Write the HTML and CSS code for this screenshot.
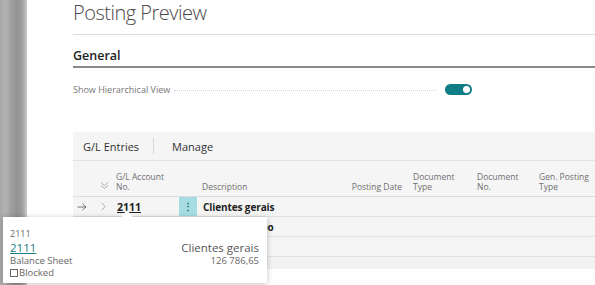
FILE: index.html
```html
<!DOCTYPE html>
<html lang="en">
<head>
    <meta charset="UTF-8">
    <title>Posting Preview</title>
    <link rel="stylesheet" href="styles.css">
</head>
<body>
    <div class="shell">
        <div class="strip"></div>
        <div class="page">
            <h1 class="title">Posting Preview</h1>
            <div class="group">
                <h2 class="group-title">General</h2>
                <div class="field">
                    <span class="field-label">Show Hierarchical View</span>
                    <span class="leader"></span>
                    <span class="toggle"><span class="knob"></span></span>
                </div>
            </div>

            <div class="part">
                <div class="part-bar">
                    <span class="part-name">G/L Entries</span>
                    <span class="part-sep"></span>
                    <span class="part-action">Manage</span>
                </div>
                <div class="grid head">
                    <span></span>
                    <span class="expand">
                        <svg width="9" height="9" viewBox="0 0 9 9"><path d="M1 1.5 L4.5 4.5 L8 1.5 M1 4.5 L4.5 7.5 L8 4.5" fill="none" stroke="#9a9a9a" stroke-width="0.8"/></svg>
                    </span>
                    <span>G/L Account<br>No.</span>
                    <span></span>
                    <span>Description</span>
                    <span class="right">Posting Date</span>
                    <span>Document<br>Type</span>
                    <span>Document<br>No.</span>
                    <span>Gen. Posting<br>Type</span>
                </div>
                <div class="grid row">
                    <span class="cursor">
                        <svg width="10" height="8" viewBox="0 0 10 8"><path d="M0.5 4 H9 M5.5 0.8 L9 4 L5.5 7.2" fill="none" stroke="#6a6a6a" stroke-width="0.9"/></svg>
                    </span>
                    <span class="chev">
                        <svg width="5" height="9" viewBox="0 0 5 9"><path d="M0.8 0.8 L4.2 4.5 L0.8 8.2" fill="none" stroke="#a6a6a6" stroke-width="0.9"/></svg>
                    </span>
                    <span class="acct">2111</span>
                    <span class="dots">&#8942;</span>
                    <span class="desc">Clientes gerais</span>
                    <span></span><span></span><span></span><span></span>
                </div>
                <div class="grid row">
                    <span></span><span></span><span></span><span></span>
                    <span class="desc">Clientes grupo</span>
                    <span></span><span></span><span></span><span></span>
                </div>
                <div class="grid row">
                    <span></span><span></span><span></span><span></span>
                    <span></span><span></span><span></span><span></span><span></span>
                </div>
                <div class="grid tail"></div>
            </div>
        </div>
    </div>

    <div class="card">
        <div class="card-key">2111</div>
        <div class="card-line">
            <span class="card-link">2111</span>
            <span class="card-name">Clientes gerais</span>
        </div>
        <div class="card-line small">
            <span>Balance Sheet</span>
            <span>126 786,65</span>
        </div>
        <div class="card-check"><span class="box"></span>Blocked</div>
    </div>
</body>
</html>
```

FILE: styles.css
```css
body {
    margin: 0;
    width: 595px;
    height: 285px;
    overflow: hidden;
    font-family: "Open Sans", "Noto Sans", sans-serif;
    color: #333;
    background: #fff;
    position: relative;
}
.shell {
    display: flex;
    height: 285px;
}
.strip {
    width: 27px;
    flex: none;
    background: linear-gradient(90deg, #a9a9a9 0, #b3b3b3 6px, #a2a2a2 10px, #939393 17px, #9d9d9d 22px, #c9c9c9 27px);
}
.page {
    flex: 1;
    padding-left: 46px;
    overflow: hidden;
}
.title {
    margin: 0;
    font-weight: 300;
    font-size: 20px;
    line-height: 26px;
    color: #4a4a4a;
    padding-bottom: 8px;
    border-bottom: 1px solid #dcdcdc;
    letter-spacing: -0.5px;
}
.group-title {
    margin: 12px 0 0;
    font-size: 12.5px;
    font-weight: 600;
    line-height: 18px;
    color: #222;
    padding-bottom: 1px;
    border-bottom: 2px solid #8a8a8a;
}
.field {
    display: flex;
    align-items: center;
    margin-top: 14px;
    height: 14px;
}
.field-label {
    font-size: 9px;
    color: #777;
}
.leader {
    width: 262px;
    margin: 2px 9px 0 4px;
    border-bottom: 1px dotted #d4d4d4;
}
.toggle {
    width: 27px;
    height: 11px;
    border-radius: 6px;
    background: #0f7d86;
    display: flex;
    justify-content: flex-end;
    align-items: center;
    padding-right: 2px;
    box-sizing: border-box;
}
.knob {
    width: 7px;
    height: 7px;
    border-radius: 50%;
    background: #fff;
}
.part {
    margin-top: 36px;
    background: #f5f5f5;
}
.part-bar {
    display: flex;
    align-items: center;
    height: 28px;
    padding-left: 10px;
    border-bottom: 1px solid #e2e2e2;
    font-size: 11px;
    color: #333;
}
.part-sep {
    width: 1px;
    height: 16px;
    background: #d6d6d6;
    margin: 0 18px 0 14px;
}
.grid {
    display: grid;
    grid-template-columns: 22px 18px 66px 18px 148px 63px 64px 62px 62px;
}
.head {
    height: 36px;
    align-items: end;
    font-size: 8.5px;
    line-height: 10px;
    color: #6f6f6f;
    border-bottom: 1px solid #dedede;
    padding-bottom: 4px;
    box-sizing: border-box;
}
.head span:nth-child(3) {
    padding-left: 3px;
}
.head .right {
    text-align: right;
    padding-right: 6px;
    white-space: nowrap;
}
.head span:nth-child(n+5) {
    padding-left: 5px;
}
.expand {
    padding-left: 5px;
}
.row {
    height: 19px;
    align-items: center;
    border-bottom: 1px solid #e1e1e1;
    font-size: 10px;
}
.cursor {
    padding-left: 4px;
    display: flex;
}
.chev {
    padding-left: 6px;
    display: flex;
}
.acct {
    font-weight: 700;
    text-decoration: underline;
    padding-left: 4px;
    color: #222;
    font-size: 10.5px;
}
.dots {
    background: #a7dde2;
    height: 19px;
    line-height: 19px;
    text-align: center;
    color: #0e7480;
    font-weight: 700;
}
.desc {
    font-weight: 700;
    padding-left: 6px;
    color: #222;
    white-space: nowrap;
    letter-spacing: -0.1px;
}
.tail {
    height: 12px;
    background: #f2f2f2;
}
.card {
    position: absolute;
    left: 3px;
    top: 217px;
    width: 264px;
    height: 66px;
    box-sizing: border-box;
    background: #fff;
    padding: 11px 8px 0 7px;
    box-shadow: 0 1px 6px rgba(0, 0, 0, 0.25);
    font-size: 9px;
    color: #555;
}
.card::before {
    content: "";
    position: absolute;
    left: 120px;
    top: -5px;
    width: 8px;
    height: 8px;
    background: #fff;
    transform: rotate(45deg);
}
.card-key {
    line-height: 12px;
    color: #666;
}
.card-line {
    display: flex;
    justify-content: space-between;
    align-items: baseline;
    font-size: 11.5px;
    line-height: 15px;
}
.card-link {
    color: #1b7d84;
    text-decoration: underline;
}
.card-name {
    color: #555;
}
.card-line.small {
    font-size: 9.5px;
    line-height: 12px;
    color: #666;
}
.card-check {
    font-size: 9.5px;
    line-height: 12px;
    color: #666;
    display: flex;
    align-items: center;
}
.box {
    width: 8px;
    height: 8px;
    border: 1px solid #666;
    box-sizing: border-box;
    margin-right: 1px;
}
```
